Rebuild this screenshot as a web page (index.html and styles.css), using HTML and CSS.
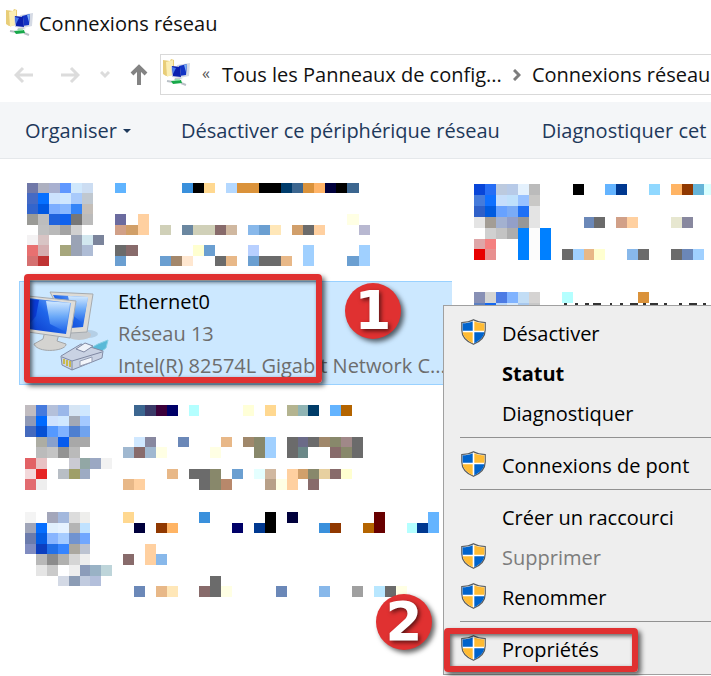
FILE: index.html
```html
<!DOCTYPE html>
<html lang="fr">
<head>
  <meta charset="UTF-8">
  <meta name="viewport" content="width=device-width, initial-scale=1.0">
  <title>Connexions réseau</title>
  <link rel="stylesheet" href="styles.css">
</head>
<body>

  <!-- Shared icons -->
  <svg class="sprite" aria-hidden="true">
    <symbol id="folder-network" viewBox="0 0 27 27">
      <path d="M0 1l7 1 1-2 3 1v15l-8 1-3-2z" fill="#e8cd78"/>
      <path d="M3 3l7-2v14l-6 3z" fill="#fbeeb4"/>
      <path d="M14 6l13-2-1 13-9 2z" fill="#d5dae4"/>
      <path d="M16 7l8-2-1 11-7 1z" fill="#1233c4"/>
      <path d="M21 6l3-1-1 8z" fill="#7fb0f5"/>
      <path d="M8 7l9 1 1 11-9-1z" fill="#c9cfdd"/>
      <path d="M9 7l8 1 1 10-8-1z" fill="#0a1fae"/>
      <path d="M9 8l4 1-3 6z" fill="#4b7cec"/>
      <path d="M12 19l5 0 3 1-9 1z" fill="#c4c9cf"/>
      <path d="M4 22l6 1M18 24l5 2" stroke="#b9c0c6" stroke-width="2"/>
      <path d="M8 22l10-1 1 3-9 1z" fill="#18a84a"/>
      <path d="M12 21l5 0" stroke="#6fe08f"/>
    </symbol>
    <symbol id="shield" viewBox="0 0 25 26">
      <path d="M12.500.800C9 2.800 5 3.500.800 3.500V11c0 7 5 11.500 11.700 14.300C19.200 22.500 24.200 18 24.200 11V3.500C20 3.500 16 2.800 12.500.800z" fill="#fff" stroke="#55595c" stroke-width="1.200"/>
      <path d="M11.700 2.200C8.600 3.600 5 4.300 1.600 4.300v7.500h10.100z" fill="#0063cc"/>
      <path d="M13.300 2.200c3.100 1.400 6.700 2.100 10.100 2.100v7.500H13.300z" fill="#ffbb33"/>
      <path d="M1.700 13.300h10v10.900C6.200 21.700 2.200 18 1.700 13.300z" fill="#ffbb33"/>
      <path d="M23.300 13.300h-10v10.900c5.500-2.500 9.500-6.200 10-10.900z" fill="#0063cc"/>
    </symbol>
  </svg>

  <header class="titlebar">
    <svg class="folder-icon" aria-hidden="true"><use href="#folder-network"/></svg>
    <h1>Connexions réseau</h1>
  </header>

  <nav class="address-row">
    <div class="nav-buttons">
      <button type="button" aria-label="Précédent"><svg width="20" height="18" viewBox="0 0 20 18"><path d="M19 9H2M9 2L2 9l7 7"/></svg></button>
      <button type="button" aria-label="Suivant"><svg width="20" height="18" viewBox="0 0 20 18"><path d="M1 9h17M11 2l7 7-7 7"/></svg></button>
      <button type="button" class="recent" aria-label="Récents"><svg width="10" height="8" viewBox="0 0 10 8"><path d="M1 1l4 4 4-4"/></svg></button>
      <button type="button" class="up" aria-label="Monter"><svg width="18" height="22" viewBox="0 0 18 22"><path d="M9 21V4M2 10l7-7 7 7"/></svg></button>
    </div>
    <div class="address">
      <svg class="folder-icon" aria-hidden="true"><use href="#folder-network"/></svg>
      <span class="more">«</span>
      <a href="#">Tous les Panneaux de config...</a>
      <svg class="chevron" width="8" height="12" viewBox="0 0 8 12" aria-hidden="true"><path d="M1 1l5 5-5 5"/></svg>
      <a href="#">Connexions réseau</a>
    </div>
  </nav>

  <div class="toolbar">
    <button type="button" class="organise">Organiser <span class="caret"></span></button>
    <button type="button">Désactiver ce périphérique réseau</button>
    <button type="button" class="diagnose">Diagnostiquer cet</button>
  </div>

  <main>
    <ul class="connections">
      <li class="tile"><svg class="mosaic" data-tile="first" aria-hidden="true"></svg></li>
      <li class="tile"><svg class="mosaic" data-tile="second" aria-hidden="true"></svg></li>
      <li class="tile selected">
        <svg class="lan-icon" viewBox="0 0 82 86" aria-hidden="true">
          <defs>
            <linearGradient id="screen" x1="0" y1="1" x2="1" y2="0">
              <stop offset="0" stop-color="#0836c8"/>
              <stop offset=".5" stop-color="#1f66ea"/>
              <stop offset="1" stop-color="#8cc0fc"/>
            </linearGradient>
            <linearGradient id="glare" x1="0" y1="0" x2="0" y2="1">
              <stop offset="0" stop-color="#d2e9ff"/>
              <stop offset=".5" stop-color="#6ba9f8"/>
              <stop offset="1" stop-color="#1d62ea"/>
            </linearGradient>
          </defs>
          <ellipse cx="60" cy="46" rx="10" ry="4" fill="#b4cfe6"/>
          <ellipse cx="51" cy="47" rx="12" ry="5" fill="#c3c7cb"/>
          <path d="M22 4l43 2-6 38-16 1z" fill="#dddbd6" stroke="#a6abb0"/>
          <path d="M25 7l35 2-5 30-12 1z" fill="url(#screen)"/>
          <path d="M40 8l20 1-5 26-11-8z" fill="url(#glare)"/>
          <path d="M17 43l14 3-2 7 9 3c1 7-28 10-32 0l9-5z" fill="#d4d3d0" stroke="#a2a5a8"/>
          <path d="M0 8l48 5-6 37-42-6z" fill="#dfddd8" stroke="#a6abb0"/>
          <path d="M0 10l43 5-5 31-38-5z" fill="url(#screen)"/>
          <path d="M0 11l11 1-3 16-8 10z" fill="#0a3bd6"/>
          <path d="M18 13l24 2-4 29-16-8z" fill="url(#glare)"/>
          <path d="M61 61l9-5 10-4-2 8-8 6z" fill="#58b9d8" stroke="#86cfe4"/>
          <path d="M33 68l20-12 22 7-1 7-30 12-10-5z" fill="#c9d2e3" stroke="#838ca6"/>
          <path d="M34 69l10 4 30-9M44 73v9" fill="none" stroke="#7f88a2"/>
          <path d="M48 61l9-6 8 3-9 6z" fill="#eef2f9" stroke="#7f88a2"/>
          <path d="M52 73l12-4v5l-12 4z" fill="#f3f6fb" stroke="#949db4"/>
          <path d="M36 71v5M39 72v6M42 73v6" stroke="#c8b94c" stroke-width="2"/>
        </svg>
        <div class="details">
          <strong>Ethernet0</strong>
          <span>Réseau 13</span>
          <span>Intel(R) 82574L Gigabit Network C...</span>
        </div>
        <div class="frame frame-tile"></div>
        <div class="badge badge-one">1</div>
      </li>
      <li class="tile"><svg class="mosaic" data-tile="third" aria-hidden="true"><path d="M98 23h3M109 23h3M119 23h4M127 23h8M144 23h2M154 23h3M164 23h8M177 23h3M184 23h8M198 23h3M213 23h3M223 23h8M237 23h3" stroke="#333" stroke-width="2"/></svg></li>
      <li class="tile"><svg class="mosaic" data-tile="fourth" aria-hidden="true"></svg></li>
      <li class="tile"></li>
      <li class="tile"><svg class="mosaic" data-tile="fifth" aria-hidden="true"></svg></li>
    </ul>
  </main>

  <div class="context-menu">
    <button type="button"><svg class="shield" aria-hidden="true"><use href="#shield"/></svg>Désactiver</button>
    <button type="button" class="default"><span class="shield"></span>Statut</button>
    <button type="button"><span class="shield"></span>Diagnostiquer</button>
    <hr>
    <button type="button"><svg class="shield" aria-hidden="true"><use href="#shield"/></svg>Connexions de pont</button>
    <hr>
    <button type="button"><span class="shield"></span>Créer un raccourci</button>
    <button type="button" disabled><svg class="shield" aria-hidden="true"><use href="#shield"/></svg>Supprimer</button>
    <button type="button"><svg class="shield" aria-hidden="true"><use href="#shield"/></svg>Renommer</button>
    <hr>
    <button type="button"><svg class="shield" aria-hidden="true"><use href="#shield"/></svg>Propriétés</button>
    <div class="frame frame-menu"></div>
    <div class="badge badge-two">2</div>
  </div>

  <script src="script.js"></script>
</body>
</html>
```
FILE: styles.css
```css
* {
  box-sizing: border-box;
}
body {
  margin: 0;
  min-height: 100vh;
  position: relative;
  overflow: hidden;
  background-color: #ffffff;
  color: #111111;
  font-family: 'Open Sans', 'Noto Sans', sans-serif;
  font-size: 20px;
  line-height: 32px;
  white-space: nowrap;
}
button {
  padding: 0;
  border: none;
  background: none;
  color: inherit;
  font: inherit;
  white-space: nowrap;
}
a {
  color: inherit;
  text-decoration: none;
}
.sprite {
  display: none;
}

/* Title and address bar */
.titlebar {
  display: flex;
  align-items: center;
  gap: 6px;
  height: 48px;
  padding: 0 6px;
}
.titlebar h1 {
  margin: 0;
  font-size: 20px;
  font-weight: normal;
}
.folder-icon {
  flex: none;
  width: 27px;
  height: 27px;
  margin-bottom: 4px;
}
.address-row {
  display: flex;
  height: 54px;
  padding: 6px 0 7px;
}
.nav-buttons {
  flex: none;
  display: flex;
  align-items: center;
  gap: 26px;
  width: 160px;
  padding-left: 14px;
}
.nav-buttons button {
  display: flex;
}
.nav-buttons svg {
  fill: none;
  stroke: #dcdcdc;
  stroke-width: 3;
}
.nav-buttons .recent {
  margin: 0 -6px;
}
.nav-buttons .up svg {
  stroke: #838383;
  stroke-width: 4;
}
.address {
  flex: 1;
  display: flex;
  align-items: center;
  min-width: 0;
  padding-left: 2px;
  border: 1px solid #d9d9d9;
  border-right: none;
}
.more {
  margin: -4px 12px 0;
  color: #555555;
  font-size: 16px;
}
.chevron {
  flex: none;
  margin: 0 11px;
  fill: none;
  stroke: #7d7d7d;
  stroke-width: 3;
}

/* Command bar */
.toolbar {
  display: flex;
  align-items: center;
  height: 57px;
  padding: 2px 0 0 25px;
  border-bottom: 1px solid #e5e8eb;
  background-color: #f4f6f8;
  color: #1e395b;
}
.organise {
  display: flex;
  align-items: center;
  gap: 6px;
  margin-right: 50px;
}
.caret {
  border: 4px solid transparent;
  border-top-color: #1e395b;
  border-bottom: none;
}
.diagnose {
  margin-left: 42px;
}

/* Connections */
.connections {
  display: grid;
  grid-template-columns: 433px minmax(0, 1fr);
  gap: 6px 14px;
  margin: 0;
  padding: 12px 0 0 19px;
  list-style: none;
}
.tile {
  position: relative;
  display: flex;
  height: 104px;
}
.selected {
  border: 1px solid #99d1ff;
  border-right: none;
  background-color: #cce8ff;
}
.mosaic {
  width: 100%;
  height: 104px;
  shape-rendering: crispEdges;
}
.lan-icon {
  flex: none;
  width: 82px;
  height: 86px;
  margin: 6px 8px 0;
}
.details {
  display: flex;
  flex-direction: column;
  padding-top: 4px;
  color: #6d6d6d;
}
.details strong {
  color: #000000;
  font-weight: normal;
}

/* Context menu */
.context-menu {
  position: absolute;
  left: 443px;
  right: 0;
  top: 305px;
  padding: 7px 0 5px;
  border: 1px solid #a0a0a0;
  border-right: none;
  background-color: #eeeeee;
  color: #000000;
}
.context-menu button {
  display: flex;
  align-items: center;
  gap: 16px;
  width: 100%;
  height: 40px;
  padding: 2px 0 0 17px;
}
.context-menu button:disabled {
  color: #7c7c7c;
}
.context-menu .default {
  font-weight: bold;
}
.context-menu hr {
  height: 1px;
  margin: 4px 0 7px 16px;
  border: none;
  background-color: #919191;
}
.shield {
  flex: none;
  width: 25px;
  height: 26px;
  margin-bottom: 4px;
}

/* Step markers */
.frame {
  position: absolute;
  border: 6px solid #e03131;
  border-radius: 4px;
  box-shadow: 3px 3px 5px rgba(0, 0, 0, 0.6), inset 2px 2px 4px rgba(0, 0, 0, 0.6);
}
.frame-tile {
  left: 4px;
  top: -8px;
  width: 298px;
  height: 109px;
}
.frame-menu {
  left: 0;
  bottom: 2px;
  width: 194px;
  height: 44px;
}
.badge {
  position: absolute;
  width: 56px;
  height: 56px;
  border-radius: 50%;
  background-color: #e03131;
  box-shadow: 3px 3px 5px rgba(0, 0, 0, 0.6);
  color: #ffffff;
  font: bold 53px/56px 'DejaVu Sans', sans-serif;
  text-align: center;
  text-shadow: 2px 2px 4px rgba(0, 0, 0, 0.6);
}
.badge-one {
  left: 325px;
  top: 1px;
}
.badge-two {
  left: -68px;
  bottom: 24px;
}
```
FILE: script.js
```javascript
// Masked tiles: each row is a list of "startColumn:colour,colour..." runs
var tiles = {
  first: { x: 8, y: 12, w: 11.05, h: 10.4, rows: [
    '0:7078a8,adb0c0,a8b0d0,6098ff,d0e8fc,ccddf2 8:60b4ff 14:3a90dc,000000,ffd890 18:b4d8ff,da923a,da923a,000000,000000,003c6c,3c668f,da923a,ffb468,00003c,000000,3c668f',
    '0:456ac4,0670ff,cce2fd,d0e8ff,a8cafb,c0c8d0',
    '0:3365cc,0058e2,7cadff,88b8ff,3384f8,c4beb8',
    '0:9a9a96,bdbdbd,1f62dc,0f62ee,777777,bbbbbb 8:6b6b9f 10:ffd0a0 29:ffffe4',
    '1:c0c0c0,b9b9b9,a3a3a3,d0d0d0 8:d1a088,d19f68,ffd0a0 12:d0d0b8 14:6b87a0,d0d0b8,d0d0b8,886b6b,d0b8a0 20:88b8ea,6b9fd1,ffe7b8 24:d19f6b,6b6b6b,ffd0a0 30:b8b8d1',
    '0:f4f2f3,d8c4c4 4:9aa3b5,d2e7ef,7b849b',
    '0:e87070,d5aeb0 3:a6a67c,9aa3b5,aebcd5 8:6b6b6b,886b6b 15:ffffd0,6b9fd1 20:b8d0ff 25:a0d0ff 30:a0d0ff',
    '0:d57070,c03434 8:6b9fd1 12:6b9fd1,a3876b,ffe7d0 17:6b6b6b,e8b888 20:6b9fd1,6b6b6b,6b6b6b,e8b888 25:a0d0ff 29:6b9fd1,a0d0ff'
  ]},
  second: { x: 8, y: 13, w: 10.95, h: 10.9, rows: [
    '0:0845d8,266df5,bccadf,b7cae8,e4f1fd,bbbbbb 9:000000 12:64b4ff,003890 16:90d8ff 18:ffb464,903800,66b4d8,d8ffff',
    '0:457bdb,0f70ff,c6defc,bfe0fc,99c2ff,c9c8c6',
    '0:2f60c8,005be0,68a2ff,7aabf6,1f70f5,e4e4e4',
    '0:e4e4e4,a39d95,a3b1d0,939fc8,979797,e4e4e4 10:6b88b8,6b6b6b 13:d1a088,ffd0a0 18:e7e7d0,88889f',
    '1:d0d0d0,c3c3c3,adadad,0080ff,fcfcfc,0080ff',
    '0:dea6a8,f48080 4:0080ff,fcfcfc,0080ff',
    '0:e80000,e89090 4:0080ff,fcfcfc,0080ff 8:6b6b6b,a0d0ff,e8b888,ffffd0 14:88b8ea,6b6b6b 18:6b6b6b,6b87b8,a0d0ff'
  ]},
  third: { x: 8, y: 11, w: 10.95, h: 11, rows: [
    '0:8890b5,d5d5d3,4c7be4,80b3ff,c2ddf5,d5d3d2 8:b4ffff 15:da923a',
    '0:5c7fc0,1467ee,b9d6f8,d6e8fa,a8c8ee,c8c8c8'
  ]},
  fourth: { x: 6, y: 14, w: 10.9, h: 10.6, rows: [
    '0:c1bcc0,467add,b4c0da,9ab7e9,d6e5f4,d0e8ff 10:3c6690,3a3a68,3c003a,000068 15:b4ffff 20:ffffd8 22:ffd890 24:b4b490,90b4b4,003c68 28:64b4ff,b46400',
    '0:9099b5,006aff,cfe2fe,d0e8ff,a3a9b5,a4c9ff',
    '0:456abd,0650d4,5599ff,80b2ff,4e7fd0,70a3ee',
    '1:adada3,88a0cc,075bee,a8a8a8,a8a8a8 10:d0e8ff,8888a0 14:6b88b8 18:e8b888 20:a0886b,88886b,a0d0ff 24:6b6b6b,6b6b88,6b6b6b,a0886b,88886b,a08888,6b6b6b',
    '1:bbbbbb,c4c4c4,939393,bababa 9:a0b8d0,886b6b,a0b8d0,ffffe4 17:ffffe4 21:88886b,a0d0ff 24:6b6b6b,6b8888 28:886b6b,88886b,6b6b6b',
    '0:e26165,e8c2c4 4:cacad3,92a7a5,9ba8c3,f2f2f2',
    '0:f3d8da,e62424 3:b8bec5,9f9f68,9dabc3 13:e8b888 15:6b6b6b,6b6b6b,88886b 19:6b9fd1 21:e4ffff,d1b8a0 24:ffd0a0,d1a06b,88886b,e7d0a0,886b6b,ffffd0',
    '0:e26b70,eeeeee 9:e8b888,ffd0a0 16:6b6b6b,88886b,b8886b 22:b8a088,ffffe4,ffd0a0 26:886b6b'
  ]},
  fifth: { x: 6, y: 11, w: 10.9, h: 10.6, rows: [
    '0:f4f4f4 2:a3a6ba,a3b8dd,dcdcdc,eeeeec 9:ffd890 16:3a90dc 22:000000 24:00003c 32:680000 37:64b4ff',
    '0:a0a5b8,066eff,e0effd,e6f2ff,b4b4b4,c0e2ff 10:00003c 12:903800,ffb464 19:000068 21:003890,000000 27:3a90dc,903800 31:b46400,680000 35:b4ffff,003890,64b4ff',
    '0:6b7bac,055de4,88b5ff,a6ccff,7093d0,70a7ff',
    '0:808cc0,0c3fbf,2270e8,3685ff,aba8a0,bcc3d1 11:ffd0a0',
    '1:b8b8b8,8c8c8c,b1b1af,d5d5d5,eeeeee 9:886b6b 11:ffd0a0,88b8ea',
    '1:e5e5e5,cacaca 4:eeeeee,8c9cba,99b2c5,bed5da',
    '3:d3d9e5,8c9cb5,c1cbdf,b3bfdb 17:6b6b6b',
    '10:6b88b8 12:e8b888,ffe7b8 16:886b6b,6b6b6b,ffffe4 23:6b88b8 27:88b8ea 30:a0a0a0 32:b8e7ff,6b6b6b,ffffe4'
  ]}
};

function drawMosaic(svg) {
  var tile = tiles[svg.dataset.tile];
  tile.rows.forEach(function (row, r) {
    var top = Math.round(tile.y + r * tile.h);
    var bottom = Math.round(tile.y + (r + 1) * tile.h);
    row.split(' ').forEach(function (run) {
      var parts = run.split(':');
      parts[1].split(',').forEach(function (color, i) {
        var col = Number(parts[0]) + i;
        var left = Math.round(tile.x + col * tile.w);
        var right = Math.round(tile.x + (col + 1) * tile.w);
        var rect = document.createElementNS('http://www.w3.org/2000/svg', 'rect');
        rect.setAttribute('x', left);
        rect.setAttribute('y', top);
        rect.setAttribute('width', right - left);
        rect.setAttribute('height', bottom - top);
        rect.setAttribute('fill', '#' + color);
        svg.appendChild(rect);
      });
    });
  });
}

document.querySelectorAll('.mosaic').forEach(drawMosaic);
```
